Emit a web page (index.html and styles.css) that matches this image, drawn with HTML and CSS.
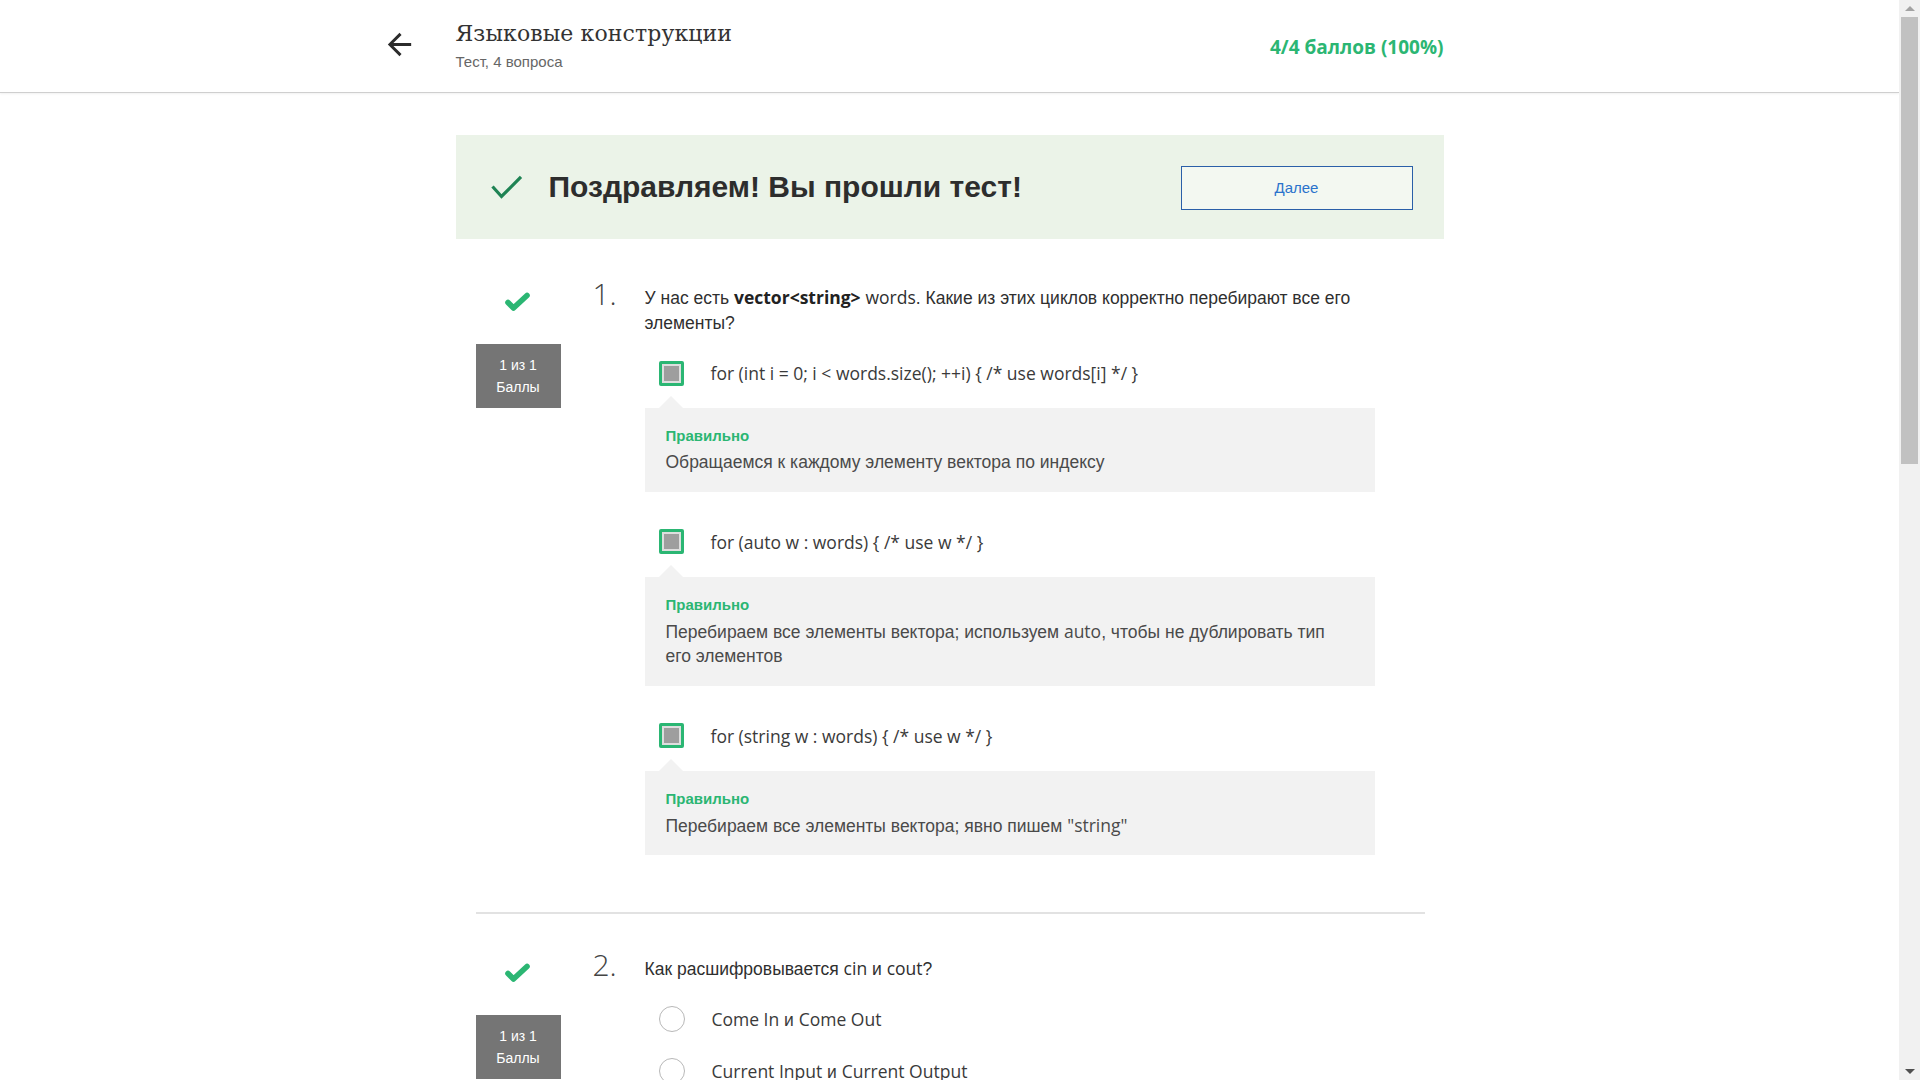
FILE: index.html
```html
<!DOCTYPE html>
<html lang="ru">
<head>
<meta charset="utf-8">
<title>Языковые конструкции</title>
<link rel="stylesheet" href="styles.css">
</head>
<body>
<header class="topbar">
  <div class="topbar-inner">
    <a class="back" href="#" aria-label="Назад">
      <svg viewBox="0 0 24 24" width="35" height="35"><path d="M20 11H7.83l5.59-5.59L12 4l-8 8 8 8 1.41-1.41L7.83 13H20v-2z" fill="#2b2b2b"/></svg>
    </a>
    <div class="titles">
      <div class="title">Языковые конструкции</div>
      <div class="subtitle">Тест, 4 вопроса</div>
    </div>
    <div class="score">4/4 баллов (100%)</div>
  </div>
</header>

<main class="page">
  <section class="banner">
    <svg class="banner-check" viewBox="0 0 34 24" width="34" height="24"><polyline points="2.5,11.5 11.5,21.5 31,1.8" fill="none" stroke="#1f8354" stroke-width="3.2"/></svg>
    <h1 class="banner-title">Поздравляем! Вы прошли тест!</h1>
    <button class="next-btn" type="button">Далее</button>
  </section>

  <div class="questions">
    <article class="question">
      <div class="q-side">
        <svg class="q-check" viewBox="0 0 28 22" width="28" height="22"><polyline points="5,11.5 10.5,17 24,4.5" fill="none" stroke="#2bb673" stroke-width="5.6" stroke-linecap="round" stroke-linejoin="round"/></svg>
        <div class="points">1 из 1<br>Баллы</div>
      </div>
      <div class="q-num">1.</div>
      <div class="q-body">
        <div class="q-text">У нас есть <b class="lat">vector&lt;string&gt;</b> <span class="lat">words</span>. Какие из этих циклов корректно перебирают все его элементы?</div>

        <div class="option">
          <span class="checkbox"><span class="checkbox-fill"></span></span>
          <span class="opt-text lat">for (int i = 0; i &lt; words.size(); ++i) { /* use words[i] */ }</span>
        </div>
        <div class="feedback">
          <div class="fb-label">Правильно</div>
          <div class="fb-text">Обращаемся к каждому элементу вектора по индексу</div>
        </div>

        <div class="option">
          <span class="checkbox"><span class="checkbox-fill"></span></span>
          <span class="opt-text lat">for (auto w : words) { /* use w */ }</span>
        </div>
        <div class="feedback">
          <div class="fb-label">Правильно</div>
          <div class="fb-text">Перебираем все элементы вектора; используем <span class="lat">auto</span>, чтобы не дублировать тип его элементов</div>
        </div>

        <div class="option">
          <span class="checkbox"><span class="checkbox-fill"></span></span>
          <span class="opt-text lat">for (string w : words) { /* use w */ }</span>
        </div>
        <div class="feedback">
          <div class="fb-label">Правильно</div>
          <div class="fb-text">Перебираем все элементы вектора; явно пишем <span class="lat">"string"</span></div>
        </div>
      </div>
    </article>

    <article class="question">
      <div class="q-side">
        <svg class="q-check" viewBox="0 0 28 22" width="28" height="22"><polyline points="5,11.5 10.5,17 24,4.5" fill="none" stroke="#2bb673" stroke-width="5.6" stroke-linecap="round" stroke-linejoin="round"/></svg>
        <div class="points">1 из 1<br>Баллы</div>
      </div>
      <div class="q-num">2.</div>
      <div class="q-body">
        <div class="q-text">Как расшифровывается <span class="lat">cin</span> и <span class="lat">cout</span>?</div>
        <div class="option radio-option">
          <span class="radio"></span>
          <span class="opt-text"><span class="lat">Come In</span> и <span class="lat">Come Out</span></span>
        </div>
        <div class="option radio-option">
          <span class="radio"></span>
          <span class="opt-text"><span class="lat">Current Input</span> и <span class="lat">Current Output</span></span>
        </div>
      </div>
    </article>
  </div>
</main>

<div class="fake-scrollbar" aria-hidden="true">
  <span class="sb-arrow sb-up"></span>
  <span class="sb-thumb"></span>
  <span class="sb-arrow sb-down"></span>
</div>
</body>
</html>
```

FILE: styles.css
```css
* { box-sizing: border-box; }

html { scrollbar-width: none; }
::-webkit-scrollbar { width: 0; height: 0; }

body {
  margin: 0;
  padding-right: 21px;
  background: #ffffff;
  font-family: "Liberation Sans", Arial, sans-serif;
  color: #333333;
}

.lat { font-family: "Open Sans", "Liberation Sans", sans-serif; }

/* ---------- fake scrollbar overlay ---------- */
.fake-scrollbar {
  position: fixed;
  top: 0;
  right: 0;
  width: 21px;
  height: 100vh;
  background: #f1f1f1;
  display: flex;
  flex-direction: column;
  align-items: center;
}

.sb-arrow {
  flex: none;
  width: 0;
  height: 0;
  border-left: 5px solid transparent;
  border-right: 5px solid transparent;
  margin: 6px 0;
}

.sb-up { border-bottom: 5px solid #a3a3a3; }
.sb-down { border-top: 5px solid #505050; margin-top: auto; }

.sb-thumb {
  width: 17px;
  height: 447px;
  background: #c1c1c1;
}

/* ---------- header ---------- */
.topbar {
  height: 93px;
  border-bottom: 1px solid #cfcfcf;
  box-shadow: 0 1px 2px rgba(0, 0, 0, 0.06);
  background: #fff;
}

.topbar-inner {
  width: 988px;
  height: 92px;
  margin: 0 auto;
  display: flex;
  align-items: center;
}

.back {
  display: flex;
  width: 35px;
  height: 35px;
  margin-left: -74px;
  margin-right: 39px;
  margin-bottom: 4px;
}

.titles {
  align-self: flex-start;
  padding-top: 19px;
  flex: 1;
}

.title {
  font-family: "DejaVu Serif", "Liberation Serif", serif;
  font-size: 22px;
  line-height: 30px;
  color: #333;
  letter-spacing: 0.1px;
}

.subtitle {
  margin-top: 3px;
  font-size: 15px;
  line-height: 20px;
  color: #666;
}

.score {
  margin-top: 2px;
  font-family: "Open Sans", sans-serif;
  font-weight: 700;
  font-size: 19px;
  color: #2bb673;
}

/* ---------- page ---------- */
.page {
  width: 988px;
  margin: 42px auto 0;
}

.banner {
  height: 104px;
  background: #ebf3e8;
  display: flex;
  align-items: center;
  padding: 0 31px 0 34px;
}

.banner-check { flex: none; margin-right: 25px; }

.banner-title {
  flex: 1;
  margin: 0;
  font-size: 30px;
  font-weight: 700;
  color: #2d2d2d;
}

.next-btn {
  width: 232px;
  height: 44px;
  border: 1px solid #2a5fa8;
  background: #f3f8f1;
  color: #2a73cc;
  font-family: "Liberation Sans", Arial, sans-serif;
  font-size: 15px;
  border-radius: 0;
  margin-top: 1px;
}

/* ---------- questions ---------- */
.questions { margin-top: 2px; }

.question {
  margin: 0 19px 0 20px;
  padding: 44px 50px 57px 0;
  display: grid;
  grid-template-columns: 85px 84px 1fr;
  align-items: start;
  border-bottom: 2px solid #e2e2e2;
}

.question + .question { padding-top: 42px; }

.q-side {
  display: flex;
  flex-direction: column;
  align-items: center;
}

.q-check { margin-top: 6px; margin-right: 2px; }

.points {
  margin-top: 31px;
  width: 85px;
  height: 64px;
  padding: 10px 0;
  background: #757575;
  color: #fff;
  font-size: 14px;
  line-height: 22px;
  text-align: center;
}

.q-num {
  padding-left: 32px;
  margin-top: -3px;
  font-family: "Open Sans", sans-serif;
  font-weight: 300;
  font-size: 30px;
  line-height: 24px;
  color: #444;
}

.q-text {
  font-size: 17.5px;
  line-height: 24.5px;
  color: #2f2f2f;
}

.q-text b { font-weight: 700; color: #222; }

.option {
  display: flex;
  align-items: center;
  margin-top: 25px;
  padding-left: 14px;
  height: 26px;
}

.feedback + .option { margin-top: 37px; }

.checkbox {
  flex: none;
  width: 25px;
  height: 25px;
  border: 3px solid #2bb673;
  border-radius: 2px;
  background: #fff;
  display: flex;
}

.checkbox-fill {
  flex: 1;
  background: #9e9e9e;
  border: 2px solid #dedede;
}

.opt-text {
  margin-left: 27px;
  font-size: 17.5px;
  color: #3a3a3a;
}

.feedback {
  position: relative;
  margin-top: 22px;
  background: #f2f2f2;
  padding: 18px 45px 17px 21px;
}

.feedback::before {
  content: "";
  position: absolute;
  top: -12px;
  left: 14px;
  border-left: 12.5px solid transparent;
  border-right: 12.5px solid transparent;
  border-bottom: 12px solid #f2f2f2;
}

.fb-label {
  font-size: 15px;
  font-weight: 700;
  line-height: 20px;
  color: #2bb673;
}

.fb-text {
  margin-top: 4px;
  font-size: 17.5px;
  line-height: 24.5px;
  color: #4a4a4a;
}

.radio-option { margin-top: 24px; }
.radio-option + .radio-option { margin-top: 26px; }

.radio {
  flex: none;
  width: 26px;
  height: 26px;
  border: 1.5px solid #b8b8b8;
  border-radius: 50%;
  background: #fff;
}
```
